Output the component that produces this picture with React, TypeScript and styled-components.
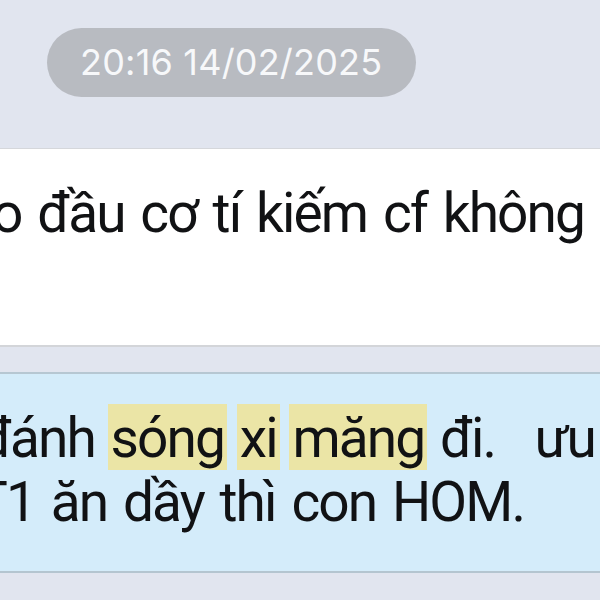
import React from "react";
import styled, { createGlobalStyle } from "styled-components";

const Global = createGlobalStyle`
  html, body { margin: 0; padding: 0; }
  body { background: #e1e5ef; font-family: Roboto, Inter, "Noto Sans", sans-serif; }
`;

const Screen = styled.div`
  width: 600px;
  height: 600px;
  overflow: hidden;
  background: #e1e5ef;
  display: flex;
  flex-direction: column;
`;

const StampRow = styled.div`
  display: flex;
  padding: 28px 0 0 47px;
`;

const Stamp = styled.div`
  height: 69px;
  line-height: 69px;
  padding: 0 34px 0 33px;
  border-radius: 35px;
  background: #b8bbc1;
  color: #f7f8fa;
  font-family: Inter, sans-serif;
  font-size: 36px;
  letter-spacing: 0.2px;
  white-space: nowrap;
`;

const Bubble = styled.div<{ $tone: "white" | "blue" }>`
  box-sizing: border-box;
  margin-top: ${(p) => (p.$tone === "white" ? "51px" : "25px")};
  height: ${(p) => (p.$tone === "white" ? "199px" : "201px")};
  background: ${(p) => (p.$tone === "white" ? "#ffffff" : "#d4ecfa")};
  border-top: ${(p) => (p.$tone === "white" ? "1px solid #d5d7db" : "2px solid #b6c7d2")};
  border-bottom: 2px solid ${(p) => (p.$tone === "white" ? "#d3d5d9" : "#b4c5d0")};
  padding-top: 32px;
  overflow: hidden;
`;

const Line = styled.div<{ $shift: number }>`
  font-family: Roboto, sans-serif;
  font-size: 55px;
  line-height: 64px;
  letter-spacing: -1.9px;
  word-spacing: 4px;
  color: #111214;
  white-space: pre;
  margin-left: ${(p) => p.$shift}px;
`;

const Mark = styled.span`
  background: #ebe5a6;
  padding: 2px 3px 0;
  margin: 0 -3px;
`;

const Tail = styled.span`
  margin-left: 8px;
`;

export default function App() {
  return (
    <>
      <Global />
      <Screen>
        <StampRow>
          <Stamp>20:16 14/02/2025</Stamp>
        </StampRow>
        <Bubble $tone="white">
          <Line $shift={-8}>o đầu cơ tí kiếm cf không</Line>
        </Bubble>
        <Bubble $tone="blue">
          <Line $shift={-21}>
            đánh <Mark>sóng</Mark> <Mark>xi</Mark> <Mark>măng</Mark> đi.  <Tail>ưu tiên</Tail>
          </Line>
          <Line $shift={-25}>T1 ăn dầy thì con HOM.</Line>
        </Bubble>
      </Screen>
    </>
  );
}
